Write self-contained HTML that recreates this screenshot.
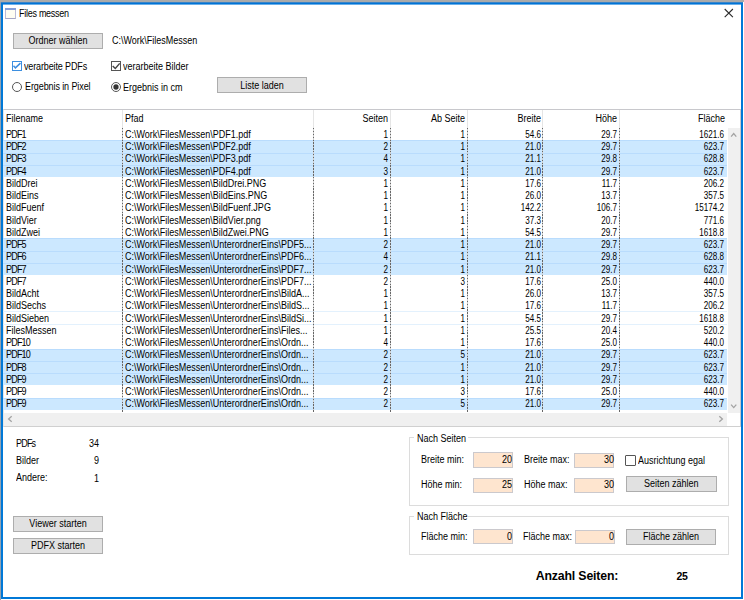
<!DOCTYPE html>
<html><head><meta charset="utf-8"><title>Files messen</title>
<style>
*{box-sizing:border-box}
html,body{margin:0;padding:0}
body{width:744px;height:600px;position:relative;overflow:hidden;background:#fff;font-family:"Liberation Sans",sans-serif;font-size:9px;color:#000}
.a{position:absolute}
.t{position:absolute;white-space:nowrap;line-height:12px;height:12px;font-size:10px;transform:scaleX(0.9);transform-origin:0 50%}
.r{text-align:right;transform-origin:100% 50%}
.n{transform:scaleX(0.81)}
.btn{position:absolute;background:#e1e1e1;border:1px solid #adadad}
.tb{position:absolute;background:#fee5cf;border:1px solid #cbc9cd}
.sel{position:absolute;left:3px;width:724px;background:#cce8ff;border-top:1px solid #b9dcfd}
.hot{position:absolute;left:3px;width:724px;border-top:1px solid #e3f1fd;border-bottom:1px solid #e3f1fd}
.dot{position:absolute;width:1px;background:repeating-linear-gradient(to bottom,#666 0,#666 1.44px,#cfcfcf 1.44px,#cfcfcf 2.88px)}
.hsep{position:absolute;width:1px;top:110px;height:18px;background:#e5e5e5}
.grp{position:absolute;border:1px solid #dcdcdc}
</style></head><body>

<div class="a" style="left:0;top:0;width:744px;height:2px;background:#ababab"></div>
<div class="a" style="left:0;top:2px;width:1px;height:598px;background:#90a2b3"></div>
<div class="a" style="left:1px;top:2px;width:742px;height:597px;border:2px solid #0078d7;border-top:0"></div>
<div class="a" style="left:1px;top:2px;width:742px;height:1px;background:#3a84c8"></div>
<div class="a" style="left:1px;top:3px;width:742px;height:1px;background:#0073d5"></div>
<div class="a" style="left:3px;top:4px;width:738px;height:1px;background:#6aaee8"></div>
<div class="a" style="left:5px;top:8px;width:11px;height:10.5px;background:#fffdf2;border:1px solid #bcbcd6;border-bottom-color:#a6a6c6"></div><div class="a" style="left:5px;top:8px;width:11px;height:2px;background:#86a0da"></div>
<div class="t" style="left:18.8px;top:8px;letter-spacing:-0.3px">Files messen</div>
<svg class="a" style="left:724px;top:8px" width="10" height="10" viewBox="0 0 10 10"><path d="M0.7 1L8.9 9.2M8.9 1L0.7 9.2" stroke="#2a2a2a" stroke-width="1.1" fill="none"/></svg>
<div class="btn" style="left:13px;top:33px;width:90px;height:16px"></div>
<div class="t" style="left:13px;width:90px;text-align:center;transform-origin:50% 50%;top:34.5px">Ordner wählen</div>
<div class="t" style="left:111.7px;top:35px">C:\Work\FilesMessen</div>
<div class="a" style="left:12px;top:61px;width:10px;height:10px;border:1px solid #3c8fe0"></div>
<svg class="a" style="left:12px;top:61px" width="10" height="10" viewBox="0 0 10 10"><path d="M1.5 4.8L3.4 6.9L8.5 2.1" stroke="#3d8de0" stroke-width="1.5" fill="none"/></svg>
<div class="t" style="left:24.3px;top:61px;letter-spacing:-0.15px">verarbeite PDFs</div>
<div class="a" style="left:110.6px;top:61.3px;width:10px;height:10px;border:1px solid #555"></div>
<svg class="a" style="left:110.6px;top:61.3px" width="10" height="10" viewBox="0 0 10 10"><path d="M1.7 5L4.3 7.5L8.7 2.4" stroke="#444" stroke-width="1.4" fill="none"/></svg>
<div class="t" style="left:123px;top:61px">verarbeite Bilder</div>
<svg class="a" style="left:12px;top:81.7px" width="10" height="10" viewBox="0 0 10 10"><circle cx="5" cy="5" r="4.5" stroke="#555" stroke-width="1" fill="none"/></svg>
<div class="t" style="left:24.9px;top:81.2px;letter-spacing:-0.1px">Ergebnis in Pixel</div>
<svg class="a" style="left:110.6px;top:81.8px" width="10" height="10" viewBox="0 0 10 10"><circle cx="5" cy="5" r="4.5" stroke="#555" stroke-width="1" fill="none"/><circle cx="5" cy="5" r="2.65" fill="#333"/></svg>
<div class="t" style="left:123px;top:81.8px">Ergebnis in cm</div>
<div class="btn" style="left:217px;top:77px;width:90px;height:16px"></div>
<div class="t" style="left:217px;width:90px;text-align:center;transform-origin:50% 50%;top:79.6px">Liste laden</div>
<div class="a" style="left:3px;top:109px;width:738px;height:317.6px;border:1px solid #c8c8cc;border-bottom-color:#d0d0d0;border-left-color:#e6e6e6"></div>
<div class="t" style="left:5.5px;top:112.5px">Filename</div>
<div class="t" style="left:124.5px;top:112.5px">Pfad</div>
<div class="t r" style="left:288.4px;width:100px;top:112.5px">Seiten</div>
<div class="t r" style="left:364.6px;width:100px;top:112.5px">Ab Seite</div>
<div class="t r" style="left:440.79999999999995px;width:100px;top:112.5px">Breite</div>
<div class="t r" style="left:516.9px;width:100px;top:112.5px">Höhe</div>
<div class="t r" style="left:625px;width:100px;top:112.5px">Fläche</div>
<div class="hsep" style="left:122px"></div>
<div class="hsep" style="left:313px"></div>
<div class="hsep" style="left:390px"></div>
<div class="hsep" style="left:466.5px"></div>
<div class="hsep" style="left:542px"></div>
<div class="hsep" style="left:619px"></div>
<div class="sel" style="top:140.40px;height:12.25px"></div>
<div class="sel" style="top:152.65px;height:12.25px"></div>
<div class="sel" style="top:164.90px;height:12.25px"></div>
<div class="sel" style="top:238.40px;height:12.25px"></div>
<div class="sel" style="top:250.65px;height:12.25px"></div>
<div class="sel" style="top:262.90px;height:12.25px"></div>
<div class="hot" style="top:311.40px;height:13.25px"></div>
<div class="sel" style="top:348.65px;height:12.25px"></div>
<div class="sel" style="top:360.90px;height:12.25px"></div>
<div class="sel" style="top:373.15px;height:12.25px"></div>
<div class="sel" style="top:397.65px;height:12.25px"></div>
<div class="dot" style="left:122px;top:128px;height:284px"></div>
<div class="dot" style="left:313px;top:128px;height:284px"></div>
<div class="dot" style="left:390px;top:128px;height:284px"></div>
<div class="dot" style="left:466.5px;top:128px;height:284px"></div>
<div class="dot" style="left:542px;top:128px;height:284px"></div>
<div class="dot" style="left:619px;top:128px;height:284px"></div>
<div class="t" style="left:5.5px;top:128.85px;letter-spacing:-0.9px">PDF1</div>
<div class="t" style="left:124.5px;top:128.85px">C:\Work\FilesMessen\PDF1.pdf</div>
<div class="t r n" style="left:308px;width:80px;top:128.85px">1</div>
<div class="t r n" style="left:384.5px;width:80px;top:128.85px">1</div>
<div class="t r n" style="left:460.5px;width:80px;top:128.85px">54.6</div>
<div class="t r n" style="left:537.2px;width:80px;top:128.85px">29.7</div>
<div class="t r n" style="left:643.5px;width:80px;top:128.85px">1621.6</div>
<div class="t" style="left:5.5px;top:141.10px;letter-spacing:-0.9px">PDF2</div>
<div class="t" style="left:124.5px;top:141.10px">C:\Work\FilesMessen\PDF2.pdf</div>
<div class="t r n" style="left:308px;width:80px;top:141.10px">2</div>
<div class="t r n" style="left:384.5px;width:80px;top:141.10px">1</div>
<div class="t r n" style="left:460.5px;width:80px;top:141.10px">21.0</div>
<div class="t r n" style="left:537.2px;width:80px;top:141.10px">29.7</div>
<div class="t r n" style="left:643.5px;width:80px;top:141.10px">623.7</div>
<div class="t" style="left:5.5px;top:153.35px;letter-spacing:-0.9px">PDF3</div>
<div class="t" style="left:124.5px;top:153.35px">C:\Work\FilesMessen\PDF3.pdf</div>
<div class="t r n" style="left:308px;width:80px;top:153.35px">4</div>
<div class="t r n" style="left:384.5px;width:80px;top:153.35px">1</div>
<div class="t r n" style="left:460.5px;width:80px;top:153.35px">21.1</div>
<div class="t r n" style="left:537.2px;width:80px;top:153.35px">29.8</div>
<div class="t r n" style="left:643.5px;width:80px;top:153.35px">628.8</div>
<div class="t" style="left:5.5px;top:165.60px;letter-spacing:-0.9px">PDF4</div>
<div class="t" style="left:124.5px;top:165.60px">C:\Work\FilesMessen\PDF4.pdf</div>
<div class="t r n" style="left:308px;width:80px;top:165.60px">3</div>
<div class="t r n" style="left:384.5px;width:80px;top:165.60px">1</div>
<div class="t r n" style="left:460.5px;width:80px;top:165.60px">21.0</div>
<div class="t r n" style="left:537.2px;width:80px;top:165.60px">29.7</div>
<div class="t r n" style="left:643.5px;width:80px;top:165.60px">623.7</div>
<div class="t" style="left:5.5px;top:177.85px">BildDrei</div>
<div class="t" style="left:124.5px;top:177.85px">C:\Work\FilesMessen\BildDrei.PNG</div>
<div class="t r n" style="left:308px;width:80px;top:177.85px">1</div>
<div class="t r n" style="left:384.5px;width:80px;top:177.85px">1</div>
<div class="t r n" style="left:460.5px;width:80px;top:177.85px">17.6</div>
<div class="t r n" style="left:537.2px;width:80px;top:177.85px">11.7</div>
<div class="t r n" style="left:643.5px;width:80px;top:177.85px">206.2</div>
<div class="t" style="left:5.5px;top:190.10px">BildEins</div>
<div class="t" style="left:124.5px;top:190.10px">C:\Work\FilesMessen\BildEins.PNG</div>
<div class="t r n" style="left:308px;width:80px;top:190.10px">1</div>
<div class="t r n" style="left:384.5px;width:80px;top:190.10px">1</div>
<div class="t r n" style="left:460.5px;width:80px;top:190.10px">26.0</div>
<div class="t r n" style="left:537.2px;width:80px;top:190.10px">13.7</div>
<div class="t r n" style="left:643.5px;width:80px;top:190.10px">357.5</div>
<div class="t" style="left:5.5px;top:202.35px">BildFuenf</div>
<div class="t" style="left:124.5px;top:202.35px">C:\Work\FilesMessen\BildFuenf.JPG</div>
<div class="t r n" style="left:308px;width:80px;top:202.35px">1</div>
<div class="t r n" style="left:384.5px;width:80px;top:202.35px">1</div>
<div class="t r n" style="left:460.5px;width:80px;top:202.35px">142.2</div>
<div class="t r n" style="left:537.2px;width:80px;top:202.35px">106.7</div>
<div class="t r n" style="left:643.5px;width:80px;top:202.35px">15174.2</div>
<div class="t" style="left:5.5px;top:214.60px">BildVier</div>
<div class="t" style="left:124.5px;top:214.60px">C:\Work\FilesMessen\BildVier.png</div>
<div class="t r n" style="left:308px;width:80px;top:214.60px">1</div>
<div class="t r n" style="left:384.5px;width:80px;top:214.60px">1</div>
<div class="t r n" style="left:460.5px;width:80px;top:214.60px">37.3</div>
<div class="t r n" style="left:537.2px;width:80px;top:214.60px">20.7</div>
<div class="t r n" style="left:643.5px;width:80px;top:214.60px">771.6</div>
<div class="t" style="left:5.5px;top:226.85px">BildZwei</div>
<div class="t" style="left:124.5px;top:226.85px">C:\Work\FilesMessen\BildZwei.PNG</div>
<div class="t r n" style="left:308px;width:80px;top:226.85px">1</div>
<div class="t r n" style="left:384.5px;width:80px;top:226.85px">1</div>
<div class="t r n" style="left:460.5px;width:80px;top:226.85px">54.5</div>
<div class="t r n" style="left:537.2px;width:80px;top:226.85px">29.7</div>
<div class="t r n" style="left:643.5px;width:80px;top:226.85px">1618.8</div>
<div class="t" style="left:5.5px;top:239.10px;letter-spacing:-0.9px">PDF5</div>
<div class="t" style="left:124.5px;top:239.10px">C:\Work\FilesMessen\UnterordnerEins\PDF5...</div>
<div class="t r n" style="left:308px;width:80px;top:239.10px">2</div>
<div class="t r n" style="left:384.5px;width:80px;top:239.10px">1</div>
<div class="t r n" style="left:460.5px;width:80px;top:239.10px">21.0</div>
<div class="t r n" style="left:537.2px;width:80px;top:239.10px">29.7</div>
<div class="t r n" style="left:643.5px;width:80px;top:239.10px">623.7</div>
<div class="t" style="left:5.5px;top:251.35px;letter-spacing:-0.9px">PDF6</div>
<div class="t" style="left:124.5px;top:251.35px">C:\Work\FilesMessen\UnterordnerEins\PDF6...</div>
<div class="t r n" style="left:308px;width:80px;top:251.35px">4</div>
<div class="t r n" style="left:384.5px;width:80px;top:251.35px">1</div>
<div class="t r n" style="left:460.5px;width:80px;top:251.35px">21.1</div>
<div class="t r n" style="left:537.2px;width:80px;top:251.35px">29.8</div>
<div class="t r n" style="left:643.5px;width:80px;top:251.35px">628.8</div>
<div class="t" style="left:5.5px;top:263.60px;letter-spacing:-0.9px">PDF7</div>
<div class="t" style="left:124.5px;top:263.60px">C:\Work\FilesMessen\UnterordnerEins\PDF7...</div>
<div class="t r n" style="left:308px;width:80px;top:263.60px">2</div>
<div class="t r n" style="left:384.5px;width:80px;top:263.60px">1</div>
<div class="t r n" style="left:460.5px;width:80px;top:263.60px">21.0</div>
<div class="t r n" style="left:537.2px;width:80px;top:263.60px">29.7</div>
<div class="t r n" style="left:643.5px;width:80px;top:263.60px">623.7</div>
<div class="t" style="left:5.5px;top:275.85px;letter-spacing:-0.9px">PDF7</div>
<div class="t" style="left:124.5px;top:275.85px">C:\Work\FilesMessen\UnterordnerEins\PDF7...</div>
<div class="t r n" style="left:308px;width:80px;top:275.85px">2</div>
<div class="t r n" style="left:384.5px;width:80px;top:275.85px">3</div>
<div class="t r n" style="left:460.5px;width:80px;top:275.85px">17.6</div>
<div class="t r n" style="left:537.2px;width:80px;top:275.85px">25.0</div>
<div class="t r n" style="left:643.5px;width:80px;top:275.85px">440.0</div>
<div class="t" style="left:5.5px;top:288.10px">BildAcht</div>
<div class="t" style="left:124.5px;top:288.10px">C:\Work\FilesMessen\UnterordnerEins\BildA...</div>
<div class="t r n" style="left:308px;width:80px;top:288.10px">1</div>
<div class="t r n" style="left:384.5px;width:80px;top:288.10px">1</div>
<div class="t r n" style="left:460.5px;width:80px;top:288.10px">26.0</div>
<div class="t r n" style="left:537.2px;width:80px;top:288.10px">13.7</div>
<div class="t r n" style="left:643.5px;width:80px;top:288.10px">357.5</div>
<div class="t" style="left:5.5px;top:300.35px">BildSechs</div>
<div class="t" style="left:124.5px;top:300.35px">C:\Work\FilesMessen\UnterordnerEins\BildS...</div>
<div class="t r n" style="left:308px;width:80px;top:300.35px">1</div>
<div class="t r n" style="left:384.5px;width:80px;top:300.35px">1</div>
<div class="t r n" style="left:460.5px;width:80px;top:300.35px">17.6</div>
<div class="t r n" style="left:537.2px;width:80px;top:300.35px">11.7</div>
<div class="t r n" style="left:643.5px;width:80px;top:300.35px">206.2</div>
<div class="t" style="left:5.5px;top:312.60px">BildSieben</div>
<div class="t" style="left:124.5px;top:312.60px">C:\Work\FilesMessen\UnterordnerEins\BildSi...</div>
<div class="t r n" style="left:308px;width:80px;top:312.60px">1</div>
<div class="t r n" style="left:384.5px;width:80px;top:312.60px">1</div>
<div class="t r n" style="left:460.5px;width:80px;top:312.60px">54.5</div>
<div class="t r n" style="left:537.2px;width:80px;top:312.60px">29.7</div>
<div class="t r n" style="left:643.5px;width:80px;top:312.60px">1618.8</div>
<div class="t" style="left:5.5px;top:324.85px">FilesMessen</div>
<div class="t" style="left:124.5px;top:324.85px">C:\Work\FilesMessen\UnterordnerEins\Files...</div>
<div class="t r n" style="left:308px;width:80px;top:324.85px">1</div>
<div class="t r n" style="left:384.5px;width:80px;top:324.85px">1</div>
<div class="t r n" style="left:460.5px;width:80px;top:324.85px">25.5</div>
<div class="t r n" style="left:537.2px;width:80px;top:324.85px">20.4</div>
<div class="t r n" style="left:643.5px;width:80px;top:324.85px">520.2</div>
<div class="t" style="left:5.5px;top:337.10px;letter-spacing:-0.9px">PDF10</div>
<div class="t" style="left:124.5px;top:337.10px">C:\Work\FilesMessen\UnterordnerEins\Ordn...</div>
<div class="t r n" style="left:308px;width:80px;top:337.10px">4</div>
<div class="t r n" style="left:384.5px;width:80px;top:337.10px">1</div>
<div class="t r n" style="left:460.5px;width:80px;top:337.10px">17.6</div>
<div class="t r n" style="left:537.2px;width:80px;top:337.10px">25.0</div>
<div class="t r n" style="left:643.5px;width:80px;top:337.10px">440.0</div>
<div class="t" style="left:5.5px;top:349.35px;letter-spacing:-0.9px">PDF10</div>
<div class="t" style="left:124.5px;top:349.35px">C:\Work\FilesMessen\UnterordnerEins\Ordn...</div>
<div class="t r n" style="left:308px;width:80px;top:349.35px">2</div>
<div class="t r n" style="left:384.5px;width:80px;top:349.35px">5</div>
<div class="t r n" style="left:460.5px;width:80px;top:349.35px">21.0</div>
<div class="t r n" style="left:537.2px;width:80px;top:349.35px">29.7</div>
<div class="t r n" style="left:643.5px;width:80px;top:349.35px">623.7</div>
<div class="t" style="left:5.5px;top:361.60px;letter-spacing:-0.9px">PDF8</div>
<div class="t" style="left:124.5px;top:361.60px">C:\Work\FilesMessen\UnterordnerEins\Ordn...</div>
<div class="t r n" style="left:308px;width:80px;top:361.60px">2</div>
<div class="t r n" style="left:384.5px;width:80px;top:361.60px">1</div>
<div class="t r n" style="left:460.5px;width:80px;top:361.60px">21.0</div>
<div class="t r n" style="left:537.2px;width:80px;top:361.60px">29.7</div>
<div class="t r n" style="left:643.5px;width:80px;top:361.60px">623.7</div>
<div class="t" style="left:5.5px;top:373.85px;letter-spacing:-0.9px">PDF9</div>
<div class="t" style="left:124.5px;top:373.85px">C:\Work\FilesMessen\UnterordnerEins\Ordn...</div>
<div class="t r n" style="left:308px;width:80px;top:373.85px">2</div>
<div class="t r n" style="left:384.5px;width:80px;top:373.85px">1</div>
<div class="t r n" style="left:460.5px;width:80px;top:373.85px">21.0</div>
<div class="t r n" style="left:537.2px;width:80px;top:373.85px">29.7</div>
<div class="t r n" style="left:643.5px;width:80px;top:373.85px">623.7</div>
<div class="t" style="left:5.5px;top:386.10px;letter-spacing:-0.9px">PDF9</div>
<div class="t" style="left:124.5px;top:386.10px">C:\Work\FilesMessen\UnterordnerEins\Ordn...</div>
<div class="t r n" style="left:308px;width:80px;top:386.10px">2</div>
<div class="t r n" style="left:384.5px;width:80px;top:386.10px">3</div>
<div class="t r n" style="left:460.5px;width:80px;top:386.10px">17.6</div>
<div class="t r n" style="left:537.2px;width:80px;top:386.10px">25.0</div>
<div class="t r n" style="left:643.5px;width:80px;top:386.10px">440.0</div>
<div class="t" style="left:5.5px;top:398.35px;letter-spacing:-0.9px">PDF9</div>
<div class="t" style="left:124.5px;top:398.35px">C:\Work\FilesMessen\UnterordnerEins\Ordn...</div>
<div class="t r n" style="left:308px;width:80px;top:398.35px">2</div>
<div class="t r n" style="left:384.5px;width:80px;top:398.35px">5</div>
<div class="t r n" style="left:460.5px;width:80px;top:398.35px">21.0</div>
<div class="t r n" style="left:537.2px;width:80px;top:398.35px">29.7</div>
<div class="t r n" style="left:643.5px;width:80px;top:398.35px">623.7</div>
<div class="a" style="left:727.6px;top:128.2px;width:12.4px;height:284.6px;background:#f0f0f0"></div>
<svg class="a" style="left:730px;top:131px" width="8" height="8" viewBox="0 0 8 8"><path d="M1.1 5.6L3.7 2.6L6.3 5.6" stroke="#a3a3a3" stroke-width="1.3" fill="none"/></svg>
<svg class="a" style="left:730px;top:402px" width="8" height="8" viewBox="0 0 8 8"><path d="M1.1 2.6L3.7 5.6L6.3 2.6" stroke="#a3a3a3" stroke-width="1.3" fill="none"/></svg>
<div class="a" style="left:4px;top:413.3px;width:723px;height:12.7px;background:#f0f0f0"></div>
<svg class="a" style="left:6px;top:415px" width="8" height="8" viewBox="0 0 8 8"><path d="M5.7 1.3L2.6 4L5.7 6.7" stroke="#a3a3a3" stroke-width="1.3" fill="none"/></svg>
<svg class="a" style="left:717px;top:415px" width="8" height="8" viewBox="0 0 8 8"><path d="M2.3 1.3L5.4 4L2.3 6.7" stroke="#a3a3a3" stroke-width="1.3" fill="none"/></svg>
<div class="t" style="left:16.3px;top:438px;letter-spacing:-0.9px">PDFs</div>
<div class="t r" style="left:59px;width:40px;top:438px">34</div>
<div class="t" style="left:16.3px;top:455px">Bilder</div>
<div class="t r" style="left:59px;width:40px;top:455px">9</div>
<div class="t" style="left:16.3px;top:472px">Andere:</div>
<div class="t r" style="left:58.5px;width:40px;top:472.7px">1</div>
<div class="btn" style="left:13px;top:516px;width:90px;height:16px"></div>
<div class="t" style="left:13px;width:90px;text-align:center;transform-origin:50% 50%;top:518px">Viewer starten</div>
<div class="btn" style="left:13px;top:538px;width:90px;height:16px"></div>
<div class="t" style="left:13px;width:90px;text-align:center;transform-origin:50% 50%;top:540px">PDFX starten</div>
<div class="grp" style="left:409px;top:437px;width:320px;height:69px"></div>
<div class="a" style="left:414px;top:432px;width:54px;height:10px;background:#fff"></div>
<div class="t" style="left:416.6px;top:433px">Nach Seiten</div>
<div class="t" style="left:421.3px;top:453.6px">Breite min:</div>
<div class="tb" style="left:473px;top:452px;width:40.2px;height:15.5px"></div>
<div class="t r" style="left:470px;width:42px;top:453.6px">20</div>
<div class="t" style="left:523.6px;top:453.6px">Breite max:</div>
<div class="tb" style="left:574.3px;top:452.5px;width:40.2px;height:15px"></div>
<div class="t r" style="left:571.5px;width:42px;top:453.6px">30</div>
<div class="a" style="left:625.3px;top:455.3px;width:10.5px;height:10.5px;border:1px solid #555;border-radius:1px"></div>
<div class="t" style="left:638px;top:455.2px">Ausrichtung egal</div>
<div class="t" style="left:421.3px;top:479.3px">Höhe min:</div>
<div class="tb" style="left:473px;top:477.7px;width:40.2px;height:15px"></div>
<div class="t r" style="left:470px;width:42px;top:479.3px">25</div>
<div class="t" style="left:523.6px;top:479.3px">Höhe max:</div>
<div class="tb" style="left:574.3px;top:477.6px;width:40.2px;height:15px"></div>
<div class="t r" style="left:571.5px;width:42px;top:479.3px">30</div>
<div class="btn" style="left:626.3px;top:476.2px;width:90.5px;height:15.5px"></div>
<div class="t" style="left:626.3px;width:90.5px;text-align:center;transform-origin:50% 50%;top:477.7px">Seiten zählen</div>
<div class="grp" style="left:409px;top:515.5px;width:320px;height:39.5px"></div>
<div class="a" style="left:414px;top:510px;width:54px;height:10px;background:#fff"></div>
<div class="t" style="left:416.6px;top:510.7px">Nach Fläche</div>
<div class="t" style="left:421px;top:530.8px">Fläche min:</div>
<div class="tb" style="left:473px;top:529.3px;width:40.2px;height:14.5px"></div>
<div class="t r" style="left:470px;width:42px;top:530.8px">0</div>
<div class="t" style="left:523.4px;top:530.8px">Fläche max:</div>
<div class="tb" style="left:574.5px;top:529.9px;width:40px;height:14.2px"></div>
<div class="t r" style="left:571.5px;width:42px;top:530.8px">0</div>
<div class="btn" style="left:626.4px;top:529.3px;width:90px;height:15.3px"></div>
<div class="t" style="left:626.4px;width:90px;text-align:center;transform-origin:50% 50%;top:530.8px">Fläche zählen</div>
<div class="a" style="left:535.7px;top:569px;font-weight:bold;font-size:12.3px;line-height:14px;white-space:nowrap;letter-spacing:-0.15px">Anzahl Seiten:</div>
<div class="a" style="left:676.5px;top:569.5px;font-weight:bold;font-size:10.5px;line-height:13px;white-space:nowrap;letter-spacing:-0.4px">25</div>
</body></html>
